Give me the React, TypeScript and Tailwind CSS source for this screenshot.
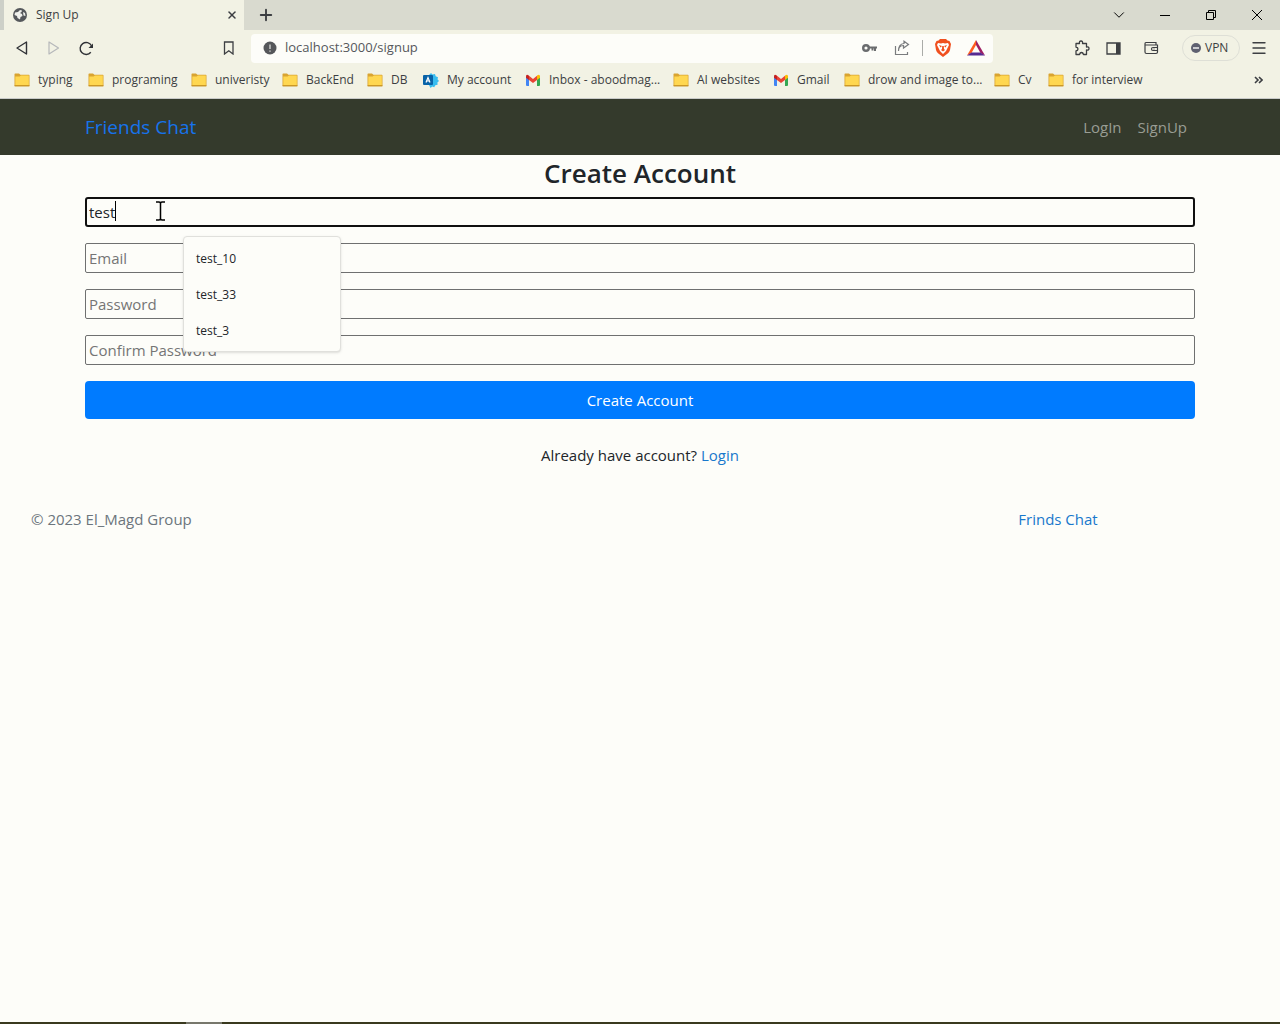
import React from "react";
import { ChevronDown, X, Plus, Menu } from "lucide-react";

const Folder = () => (
  <svg width="16" height="16" viewBox="0 0 16 16" className="shrink-0">
    <path d="M.5 3V2Q.5 1.500 1.200 1.500H5l1.400 1.300h8.400q.7 0 .7.7v10q0 .7-.7.7H1.200q-.7 0-.7-.7z" fill="#d9a431" />
    <path d="M1.300 4.500h4.300L7 3.600h7.800V13H1.300z" fill="#ffd750" />
    <path d="M.5 13.800h15" stroke="#c69323" />
  </svg>
);

const Gmail = () => (
  <svg width="16" height="16" viewBox="0 0 16 16" className="shrink-0">
    <path d="M1 4v9q0 1 1 1h2V6z" fill="#4285f4" />
    <path d="M15 4v9q0 1-1 1h-2V6z" fill="#34a853" />
    <path d="M12 3.500 13 3q2-.8 2 1.500v1.300L12 8z" fill="#fbbc04" />
    <path d="M4 3.800 8 7l4-3.200V8l-4 3-4-3z" fill="#ea4335" />
    <path d="M1 4.500Q1 2 3 3l1 .8V8L1 5.800z" fill="#c5221f" />
  </svg>
);

const Account = () => (
  <svg width="16" height="16" viewBox="0 0 16 16" className="shrink-0">
    <path d="m8 1 1.500 1.500L12 2l.7 2.300 2.300.9-.5 2.100L16 9l-1.600 1.500.2 2.300-2.300.4-1.100 2-2-.8L7.500 16 6 13V3z" fill="#38bdf0" />
    <rect y="3" width="10" height="10" rx="1" fill="#0863a8" />
    <path d="m3 10.500 2-5 2 5M3.700 9h2.600" fill="none" stroke="#fff" strokeWidth="1.200" />
  </svg>
);

type Mark = { label: string; icon: React.ReactNode; width: string };
const bookmarks: Mark[] = [
  { label: "typing", icon: <Folder />, width: "w-[74px]" },
  { label: "programing", icon: <Folder />, width: "w-[103px]" },
  { label: "univeristy", icon: <Folder />, width: "w-[91px]" },
  { label: "BackEnd", icon: <Folder />, width: "w-[85px]" },
  { label: "DB", icon: <Folder />, width: "w-[56px]" },
  { label: "My account", icon: <Account />, width: "w-[102px]" },
  { label: "Inbox - aboodmag...", icon: <Gmail />, width: "w-[148px]" },
  { label: "AI websites", icon: <Folder />, width: "w-[100px]" },
  { label: "Gmail", icon: <Gmail />, width: "w-[71px]" },
  { label: "drow and image to...", icon: <Folder />, width: "w-[150px]" },
  { label: "Cv", icon: <Folder />, width: "w-[54px]" },
  { label: "for interview", icon: <Folder />, width: "w-[100px]" },
];

function TabStrip() {
  return (
    <div className="flex h-[30px] items-stretch bg-[#d9dacf]">
      <div className="w-1 bg-[#cdd0c8]" />
      <div className="flex w-60 items-center bg-[#f2f2e4] pr-0.5 pl-2">
        <svg width="16" height="16" viewBox="0 0 16 16" className="mr-2">
          <circle cx="8" cy="8" r="7" fill="#55585b" />
          <path d="M3 5.500 6 5l2-2 2 .5-.5 1.500L8 6l2 1 .5 2-2 1L8 12.500 5.500 11 5 9 2.500 8zM11 5l2 1 .5 3-2-.5z" fill="#f0f1ec" />
        </svg>
        <span className="grow text-xs">Sign Up</span>
        <button aria-label="Close tab" className="p-1"><X size={12} strokeWidth={3} /></button>
      </div>
      <button aria-label="New tab" className="w-11"><Plus size={18} strokeWidth={2.5} className="mx-auto" /></button>
      <div className="ml-auto flex text-black">
        <button aria-label="Search tabs" className="grid w-[46px] place-items-center"><ChevronDown size={18} strokeWidth={1.3} /></button>
        <button aria-label="Minimize" className="grid w-[46px] place-items-center">
          <svg width="10" height="10"><path d="M0 5.500h10" stroke="#000" /></svg>
        </button>
        <button aria-label="Restore" className="grid w-[46px] place-items-center">
          <svg width="10" height="10" fill="none" stroke="#000"><path d="M.5 2.500h7v7h-7zM2.500 2.500v-2h7v7h-2" /></svg>
        </button>
        <button aria-label="Close" className="grid w-[46px] place-items-center">
          <svg width="10" height="10" stroke="#000"><path d="m0 0 10 10M10 0 0 10" /></svg>
        </button>
      </div>
    </div>
  );
}

function Toolbar() {
  return (
    <div className="flex h-9 items-center">
      <button aria-label="Back" className="grid w-8 place-items-center pl-3">
        <svg width="14" height="14" fill="none" stroke="#303236" strokeWidth="1.400" strokeLinejoin="round"><path d="M11.500 1v12L2 7z" /></svg>
      </button>
      <button aria-label="Forward" className="grid w-11 place-items-center">
        <svg width="14" height="14" fill="none" stroke="#b6b8ba" strokeWidth="1.200" strokeLinejoin="round"><path d="M2 1v12l9.500-6z" /></svg>
      </button>
      <button aria-label="Reload" className="grid w-5 place-items-center">
        <svg width="15" height="15" fill="none" stroke="#303236" strokeWidth="1.400">
          <path d="M11.800 11.300a6 6 0 1 1 .7-6.500" />
          <path d="M14 2.500v4.500H9.500z" fill="#303236" stroke="none" />
        </svg>
      </button>
      <button aria-label="Bookmark this page" className="ml-[117px] grid w-8 place-items-center">
        <svg width="12" height="14" fill="none" stroke="#3d3f42" strokeWidth="1.300"><path d="M1.500 1h8.500v12l-4.200-3.200L1.500 13z" /></svg>
      </button>
      <div className="ml-1.5 flex h-[29px] w-[58%] items-center rounded bg-[#fdfdf9] pr-2 pl-3">
        <svg width="14" height="14" className="mr-2 shrink-0">
          <circle cx="7" cy="7" r="6.500" fill="#55575a" />
          <path d="M7 3.500V8M7 9.500v1.300" stroke="#c8c9c6" strokeWidth="1.500" />
        </svg>
        <input aria-label="Address" defaultValue="localhost:3000/signup" className="min-w-0 grow bg-transparent text-[13px] text-[#55585c] outline-none" />
        <button aria-label="Passwords" className="mr-4">
          <svg width="16" height="14" fill="none" stroke="#6a6c6e"><circle cx="4" cy="7" r="2.800" strokeWidth="2.400" /><path d="M7 6.500h8M13 7v3M10.500 7v2.500" strokeWidth="2" /></svg>
        </button>
        <button aria-label="Share">
          <svg width="16" height="16" fill="none" stroke="#7a7c7e" strokeWidth="1.200"><path d="M1.500 6v8.500h12V12M4.500 11q0-5.500 5-5.500V8L14.500 4.500 10 1.200V3.500Q4.500 4 4.500 11" /></svg>
        </button>
        <span className="mx-3 h-4 w-px bg-[#aaaca8]" />
        <button aria-label="Brave Shields">
          <svg width="16" height="18" viewBox="0 0 16 18">
            <path d="M5 0h6l1.500 1.500 2 .5 1.500 3-1 6q-.5 2-2 3.200L8 18l-5-3.800Q1.500 13 1 11L0 5l1.500-3 2-.5z" fill="#f0501f" />
            <path d="m3 4 3 .5L8 4l2 .5 3-.5 1 2-2 4-1 2-3 3-3-3-1-2-2-4z" fill="#fff" />
            <path d="m4 6 3 1-1.500 1.500zM12 6 9 7l1.500 1.500zM7.200 7h1.600L9 10l1 1-2 1.500L6 11l1-1z" fill="#f0501f" />
          </svg>
        </button>
        <button aria-label="Brave Rewards" className="ml-4">
          <svg width="18" height="16" viewBox="0 0 18 16">
            <path d="M9 0 0 15.500l4.500-2.500L9 5z" fill="#ff5c20" />
            <path d="m9 0 9 15.500-4.500-2.500L9 5z" fill="#9e1f63" />
            <path d="m0 15.500 4.500-3h9l4.500 3z" fill="#562a91" />
          </svg>
        </button>
      </div>
      <div className="ml-auto flex items-center text-[#3d3f42]">
        <button aria-label="Extensions" className="w-8">
          <svg width="16" height="16" fill="none" stroke="currentColor" strokeWidth="1.300" strokeLinejoin="round">
            <path d="M2 3.500h3.500Q5 1 7 1t1.500 2.500H12.500V7Q15 6.500 15 8.500T12.500 10v4.500H9.500Q9 12.500 7.500 12.500T5.500 14.500H2V11Q4 10.500 4 9T2 7z" />
          </svg>
        </button>
        <button aria-label="Sidebar" className="w-[38px]">
          <svg width="15" height="13"><path d="M1 1h13v11H1z" fill="none" stroke="currentColor" strokeWidth="1.300" /><path d="M10 1h4v11h-4z" fill="currentColor" /></svg>
        </button>
        <button aria-label="Wallet" className="w-[38px]">
          <svg width="15" height="14" fill="none" stroke="currentColor" strokeWidth="1.200"><path d="M12 4V1.500H2Q1 1.500 1 3v8q0 1.500 1.500 1.500H12Q13.500 12.500 13.500 11V4H1M13.500 6.500H9Q7.500 6.500 7.500 8T9 9.500h4.500M9.500 8h1" /></svg>
        </button>
        <button className="mr-2.5 flex h-[26px] w-[58px] items-center gap-1 rounded-full border border-[#dedfd6] pl-2 text-xs">
          <svg width="10" height="10"><circle cx="5" cy="5" r="5" fill="#5e6070" /><path d="M2 5h6" stroke="#f0f1f0" strokeWidth="1.500" /></svg>
          VPN
        </button>
        <button aria-label="Menu" className="mr-3"><Menu size={18} strokeWidth={1.8} /></button>
      </div>
    </div>
  );
}

function BookmarkBar() {
  return (
    <nav aria-label="Bookmarks" className="flex h-7 items-center pr-[17px] pl-[14px]">
      {bookmarks.map((b) => (
        <a key={b.label} href="#" className={"flex shrink-0 items-center gap-2 whitespace-nowrap " + b.width}>
          {b.icon}
          <span>{b.label}</span>
        </a>
      ))}
      <button aria-label="More bookmarks" className="ml-auto">
        <svg width="9" height="8" fill="none" stroke="currentColor" strokeWidth="1.600"><path d="m1 1 3 3-3 3M5 1l3 3-3 3" /></svg>
      </button>
    </nav>
  );
}

const suggestions = ["test_10", "test_33", "test_3"];
const field = "h-[30px] w-full rounded-[2px] border border-[#6f7070] bg-transparent px-[3px] text-[15px] placeholder:text-[#757575]";

export default function App() {
  return (
    <div className="flex min-h-screen flex-col bg-[#fdfdf9] font-['Open_Sans','Noto_Sans',sans-serif] text-[#212529]">
      <header className="border-b border-[#c8cac8] bg-[#f2f2e4] pb-1 text-xs text-[#3c3e42]">
        <TabStrip />
        <Toolbar />
        <BookmarkBar />
      </header>
      <nav className="h-14 bg-[#343a2c] text-[15px]">
        <div className="mx-auto flex h-full max-w-[1110px] items-center">
          <a href="#" className="mr-auto text-[19px] text-[#1673ec]">Friends Chat</a>
          <a href="#" className="px-2 text-[#999d94]">LogIn</a>
          <a href="#" className="px-2 text-[#999d94]">SignUp</a>
        </div>
      </nav>
      <main className="mx-auto w-full max-w-[1110px] text-[15px]">
        <h1 className="mb-1.5 text-center text-[26px] leading-9 font-semibold">Create Account</h1>
        <form className="flex flex-col gap-4">
          <div className="relative flex">
            <input aria-label="Username" defaultValue="test" className="h-[30px] w-full rounded-[3px] border-2 border-[#101010] bg-transparent px-0.5 text-[15px] outline-none" />
            <span className="absolute top-1 left-[30px] h-5 w-px bg-black" />
            <svg width="9" height="20" className="absolute top-1 left-[71px]" stroke="#000" fill="none">
              <path d="M0 1h3q1.500 0 1.500 1.500v15Q4.500 19 3 19H0M9 1H6Q4.500 1 4.500 2.500v15Q4.500 19 6 19h3" strokeWidth="1.500" />
            </svg>
            <ul role="listbox" aria-label="Suggestions" className="absolute top-[39px] left-[98px] w-[158px] rounded border border-[#e0e0dc] bg-[#fdfdf9] pt-1 pb-0.5 text-xs shadow-sm">
              {suggestions.map((s) => (
                <li key={s} role="option" aria-selected={false} className="flex h-9 items-center px-3">{s}</li>
              ))}
            </ul>
          </div>
          <input type="email" aria-label="Email" placeholder="Email" className={field} />
          <input type="password" aria-label="Password" placeholder="Password" className={field} />
          <input type="password" aria-label="Confirm Password" placeholder="Confirm Password" className={field} />
          <button type="button" className="h-[38px] rounded bg-[#007bff] text-white">Create Account</button>
        </form>
        <p className="mt-6 text-center leading-6">
          Already have account? <a href="#" className="text-[#1878cc]">Login</a>
        </p>
      </main>
      <footer className="mt-10 grid grid-cols-3 px-[31px] text-[15px] leading-6">
        <span className="text-[#6c757d]">© 2023 El_Magd Group</span>
        <a href="#" className="col-start-3 ml-6 justify-self-center text-[#1878cc]">Frinds Chat</a>
      </footer>
      <div className="mt-auto h-0.5 bg-[#39391e] pl-[186px]">
        <div className="h-full w-9 bg-[#77776c]" />
      </div>
    </div>
  );
}
